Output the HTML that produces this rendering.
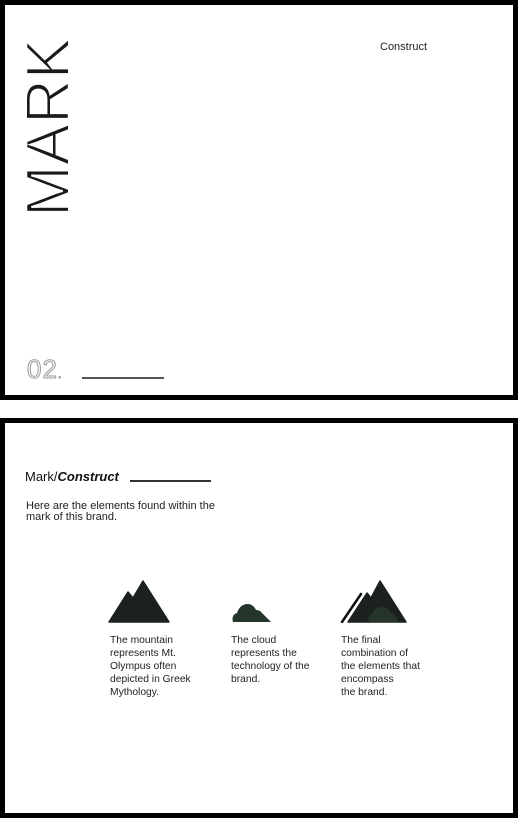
<!DOCTYPE html>
<html><head><meta charset="utf-8"><style>
*{margin:0;padding:0;box-sizing:border-box}
body{width:518px;height:818px;background:#fff;position:relative;font-family:"Liberation Sans",sans-serif;color:#222;overflow:hidden}
.panel{position:absolute;left:0;width:518px;border:5px solid #000}
.a{position:absolute}
.t{font-size:10.3px;line-height:13px;color:#222}
</style></head><body>
<div class="panel" style="top:0;height:400px"></div>
<div class="panel" style="top:418px;height:400px"></div>

<div class="a" style="left:26px;top:217px;transform-origin:0 0;transform:rotate(-90deg);font-size:62px;line-height:46px;color:#1a1a1a;-webkit-text-stroke:2px #fff;height:46px;white-space:nowrap;letter-spacing:0px">MARK</div>
<div class="a" style="left:380px;top:41px;font-size:11px;color:#222">Construct</div>

<div class="a" style="left:27px;top:355px;font-size:26px;line-height:28px;color:#fff;-webkit-text-stroke:1px #999;letter-spacing:1px">02<span style="font-size:13px">.</span></div>
<div class="a" style="left:82px;top:377px;width:82px;height:2px;background:#555"></div>

<div class="a" style="left:25px;top:469px;font-size:13px;color:#111">Mark/<i style="font-weight:bold">Construct</i></div>
<div class="a" style="left:130px;top:480px;width:81px;height:1.5px;background:#333"></div>
<div class="a" style="left:26px;top:501px;font-size:11px;line-height:10.5px;color:#222">Here are the elements found within the<br>mark of this brand.</div>

<svg class="a" style="left:108px;top:580px" width="64" height="43" viewBox="0 0 64 43">
<path d="M1 42 L20 12 L25 18 L35 1 L61 42 Z" fill="#1b221d" stroke="#1b221d" stroke-linejoin="round" stroke-width="1.5"/></svg>
<svg class="a" style="left:231px;top:601px" width="42" height="22" viewBox="0 0 42 22">
<path d="M2 21 Q0 14 6 12 Q9 3 17 3 Q22 3 25 9 Q29 9 31 12 L40 21 Z" fill="#24352a"/></svg>
<svg class="a" style="left:340px;top:580px" width="70" height="43" viewBox="0 0 70 43">
<path d="M2 42 L21 14" stroke="#111" stroke-width="2.5" stroke-linecap="round"/>
<path d="M8 42 L27 13 L31 18 L40 1 L66 42 Z" fill="#1b221d" stroke="#1b221d" stroke-linejoin="round" stroke-width="1.5"/>
<path d="M29 42 Q27 36 32 34 Q35 27 42 27 Q48 27 50 32 Q56 33 58 42 Z" fill="#26352b"/></svg>

<div class="a t" style="left:110px;top:634px">The mountain<br>represents Mt.<br>Olympus often<br>depicted in Greek<br>Mythology.</div>
<div class="a t" style="left:231px;top:634px">The cloud<br>represents the<br>technology of the<br>brand.</div>
<div class="a t" style="left:341px;top:634px">The final<br>combination of<br>the elements that<br>encompass<br>the brand.</div>
</body></html>
